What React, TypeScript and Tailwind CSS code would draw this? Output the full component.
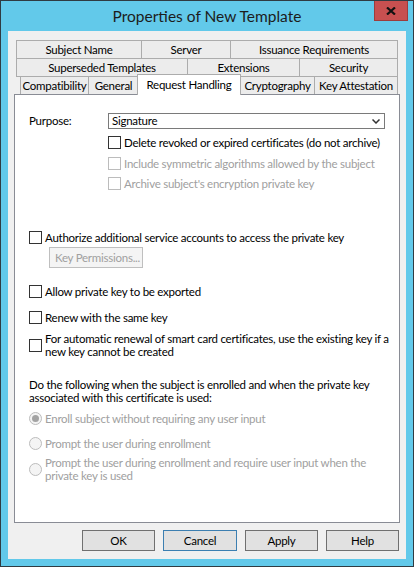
import React from "react"

const font = "[font-family:Lato,'Liberation_Sans',sans-serif]"

function Tab({ label, w, cls = "" }: { label: string; w: string; cls?: string }) {
	return (
		<div
			className={`${w} h-full flex items-center justify-center bg-[#ececec] border-[#acacac] text-black whitespace-nowrap ${cls}`}
		>
			{label}
		</div>
	)
}

function Check({ disabled = false }: { disabled?: boolean }) {
	return (
		<span
			className={`block shrink-0 w-[13px] h-[13px] border bg-white ${
				disabled ? "border-[#bcbcbc]" : "border-[#333333]"
			}`}
		/>
	)
}

function Radio({ checked = false }: { checked?: boolean }) {
	return (
		<span className="flex shrink-0 w-[13px] h-[13px] rounded-full border border-[#bcbcbc] bg-[#f4f4f4] items-center justify-center">
			{checked && <span className="block w-[7px] h-[7px] rounded-full bg-[#a3a3a3]" />}
		</span>
	)
}

function CheckRow({
	label,
	disabled = false,
	cls = "",
}: {
	label: string
	disabled?: boolean
	cls?: string
}) {
	return (
		<div className={`flex items-center h-[13px] gap-[3px] ${cls}`}>
			<Check disabled={disabled} />
			<span className={`leading-[13px] whitespace-nowrap ${disabled ? "text-[#a0a0a0]" : "text-black"}`}>
				{label}
			</span>
		</div>
	)
}

export default function App() {
	return (
		<div
			className={`w-[414px] h-[567px] bg-[#62c9ea] border border-[#2f3b42] flex flex-col text-[11.5px] tracking-[-0.25px] ${font}`}
		>
			{/* title bar */}
			<div className="relative h-[30px] shrink-0 flex items-center justify-center">
				<span className="text-[15.5px] tracking-normal text-[#1c1c1c] pt-[1px]">Properties of New Template</span>
				<button className="absolute top-0 right-[5px] w-[34px] h-[20px] bg-[#c75050] border border-[#9d3c3c] border-t-0 flex items-center justify-center">
					<svg width="10" height="8" viewBox="0 0 10 8">
						<path d="M1 0.5 L9 7.5 M9 0.5 L1 7.5" stroke="#111" strokeWidth="2.2" />
					</svg>
				</button>
			</div>

			{/* client area */}
			<div className="mx-[7px] h-[528px] bg-[#f0f0f0] pt-[9px] flex flex-col">
				<div className="ml-[6px] w-[386px]">
					{/* back rows */}
					<div className="ml-[2px] w-[382px] h-[18px] flex">
						<Tab label="Subject Name" w="w-[125px]" cls="border-t border-l" />
						<Tab label="Server" w="w-[89px]" cls="border-t border-l" />
						<Tab label="Issuance Requirements" w="w-[168px]" cls="border-t border-l border-r" />
					</div>
					<div className="ml-[2px] w-[382px] h-[18px] flex">
						<Tab label="Superseded Templates" w="w-[171px]" cls="border-t border-l" />
						<Tab label="Extensions" w="w-[112px]" cls="border-t border-l" />
						<Tab label="Security" w="w-[99px]" cls="border-t border-l border-r" />
					</div>
					{/* front row */}
					<div className="ml-[2px] w-[382px] h-[18px] border-t border-[#acacac] flex pl-[4px]">
						<Tab label="Compatibility" w="w-[68px]" cls="border-l" />
						<Tab label="General" w="w-[50px]" cls="border-l" />
						<div className="relative z-10 -ml-px -mt-[3px] w-[104px] h-[21px] shrink-0 bg-white border border-b-0 border-[#acacac] flex items-center justify-center whitespace-nowrap pb-[1px]">
							Request Handling
						</div>
						<Tab label="Cryptography" w="w-[73px]" />
						<Tab label="Key Attestation" w="w-[84px]" cls="border-l border-r" />
					</div>

					{/* panel */}
					<div className="w-[386px] h-[429px] bg-white border border-[#898c95] pl-[14px] pt-[18px] flex flex-col">
						<div className="flex items-center h-[16px]">
							<span className="w-[79px] text-black">Purpose:</span>
							<div className="w-[277px] h-[16px] border border-[#7a7a7a] bg-white flex items-center justify-between pl-[3px] pr-[4px]">
								<span className="text-black leading-[14px]">Signature</span>
								<svg width="8" height="5" viewBox="0 0 8 5">
									<path d="M0.5 0.5 L4 4 L7.5 0.5" stroke="#333" strokeWidth="1.5" fill="none" />
								</svg>
							</div>
						</div>
						<div className="pl-[79px] flex flex-col">
							<CheckRow label="Delete revoked or expired certificates (do not archive)" cls="mt-[7px]" />
							<CheckRow label="Include symmetric algorithms allowed by the subject" disabled cls="mt-[8px]" />
							<CheckRow label="Archive subject's encryption private key" disabled cls="mt-[7px]" />
						</div>

						<CheckRow label="Authorize additional service accounts to access the private key" cls="mt-[41px]" />
						<button className="mt-[3px] ml-[20px] w-[94px] h-[21px] bg-[#f4f4f4] border border-[#bfbfbf] text-[#a0a0a0] text-left pl-[5px] leading-[19px] whitespace-nowrap">
							Key Permissions...
						</button>

						<CheckRow label="Allow private key to be exported" cls="mt-[17px]" />
						<CheckRow label="Renew with the same key" cls="mt-[13px]" />

						<div className="mt-[8px] flex items-center gap-[3px]">
							<Check />
							<span className="leading-[13px] text-black whitespace-nowrap">
								For automatic renewal of smart card certificates, use the existing key if a
								<br />
								new key cannot be created
							</span>
						</div>

						<p className="mt-[20px] leading-[13px] text-black whitespace-nowrap">
							Do the following when the subject is enrolled and when the private key
							<br />
							associated with this certificate is used:
						</p>

						<div className="mt-[8px] flex items-center h-[13px] gap-[3px]">
							<Radio checked />
							<span className="leading-[13px] text-[#a0a0a0] whitespace-nowrap">Enroll subject without requiring any user input</span>
						</div>
						<div className="mt-[12px] flex items-center h-[13px] gap-[3px]">
							<Radio />
							<span className="leading-[13px] text-[#a0a0a0] whitespace-nowrap">Prompt the user during enrollment</span>
						</div>
						<div className="mt-[6px] flex items-center gap-[3px]">
							<Radio />
							<span className="leading-[13px] text-[#a0a0a0] whitespace-nowrap">
								Prompt the user during enrollment and require user input when the
								<br />
								private key is used
							</span>
						</div>
					</div>
				</div>

				{/* buttons */}
				<div className="mt-[7px] pr-[7px] flex justify-end gap-[8px]">
					<button className="w-[73px] h-[21px] bg-[#e1e1e1] border border-[#707070] text-black">OK</button>
					<button className="w-[74px] h-[21px] bg-[#e1e1e1] border border-[#3c7fb1] text-black">Cancel</button>
					<button className="w-[73px] h-[21px] bg-[#e1e1e1] border border-[#707070] text-black">Apply</button>
					<button className="w-[73px] h-[21px] bg-[#e1e1e1] border border-[#707070] text-black">Help</button>
				</div>
			</div>
		</div>
	)
}
